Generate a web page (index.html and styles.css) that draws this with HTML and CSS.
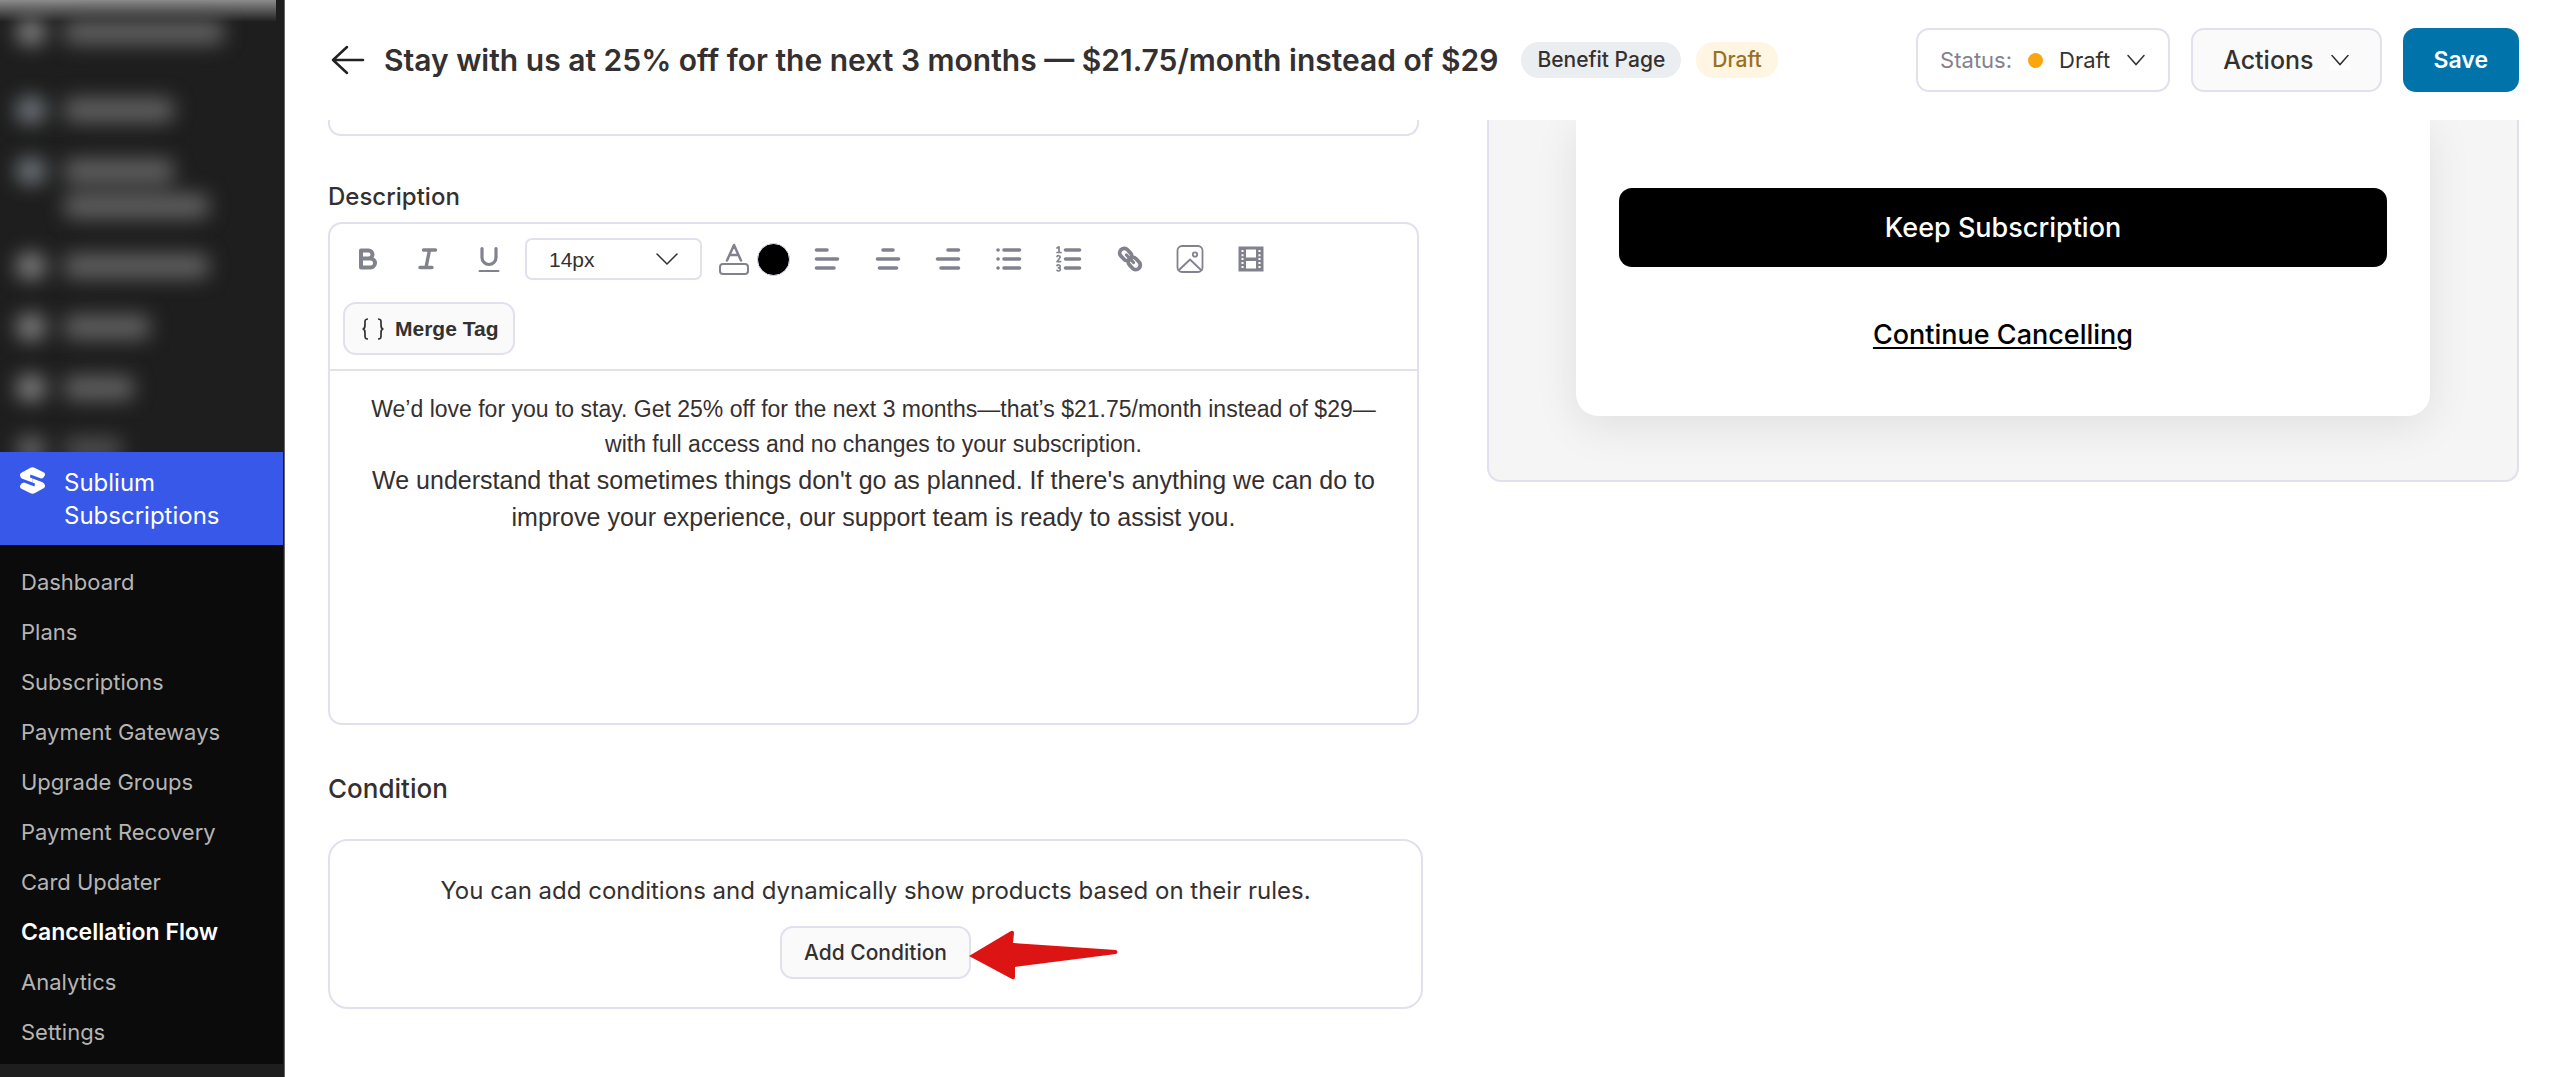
FILE: index.html
```html
<!DOCTYPE html>
<html lang="en">
<head>
<meta charset="utf-8">
<meta name="viewport" content="width=device-width, initial-scale=1">
<title>Cancellation Flow – Sublium Subscriptions</title>
<link rel="stylesheet" href="styles.css">
</head>
<body>
<div class="app">
  <aside class="sidebar">
    <div class="redacted" aria-hidden="true">
      <div class="redacted-row first"><i class="blob"></i><div class="bars"><i class="bar w160"></i></div></div>
      <div class="redacted-row"><i class="blob cool"></i><div class="bars"><i class="bar w110"></i></div></div>
      <div class="redacted-row double"><i class="blob cool"></i><div class="bars"><i class="bar w110"></i><i class="bar w145"></i></div></div>
      <div class="redacted-row"><i class="blob"></i><div class="bars"><i class="bar w145"></i></div></div>
      <div class="redacted-row"><i class="blob"></i><div class="bars"><i class="bar w90"></i></div></div>
      <div class="redacted-row"><i class="blob"></i><div class="bars"><i class="bar w70"></i></div></div>
      <div class="redacted-row last"><i class="blob"></i><div class="bars"><i class="bar w60"></i></div></div>
    </div>
    <a class="menu-current" href="#">
      <svg class="menu-logo" viewBox="0 0 25 27" width="25" height="27" fill="#fff"><path id="half" d="M1 6 10 1Q12.500-.4 15 1L24 5.500Q25.400 6.500 24.800 8.500 24 11 21 11.500L10.500 7.500 10 10.500 12.500 11.500V15.500L3 12Q.2 11 0 8.500-.2 7 1 6Z"/><use href="#half" transform="rotate(180 12.500 13.500)"/></svg>
      <span>Sublium Subscriptions</span>
    </a>
    <nav class="submenu">
      <a href="#">Dashboard</a>
      <a href="#">Plans</a>
      <a href="#">Subscriptions</a>
      <a href="#">Payment Gateways</a>
      <a href="#">Upgrade Groups</a>
      <a href="#">Payment Recovery</a>
      <a href="#">Card Updater</a>
      <a href="#" class="active" aria-current="page">Cancellation Flow</a>
      <a href="#">Analytics</a>
      <a href="#">Settings</a>
    </nav>
  </aside>

  <div class="page">
    <header class="topbar">
      <a class="back" href="#" aria-label="Back"><svg viewBox="0 0 40 32" width="40" height="32" fill="none" stroke="#222" stroke-width="2.500" stroke-linecap="round" stroke-linejoin="round"><path d="M35 16H5M19 3 5 16 19 29"/></svg></a>
      <h1>Stay with us at 25% off for the next 3 months — $21.75/month instead of $29</h1>
      <span class="pill">Benefit Page</span>
      <span class="pill draft">Draft</span>
      <div class="actions">
        <button class="status" type="button"><span class="muted">Status:</span><i class="dot"></i><span>Draft</span><svg class="chev" viewBox="0 0 20 20" width="20" height="20"><path d="M2 5.500 10 14.500 18 5.500"/></svg></button>
        <button class="menu-btn" type="button">Actions<svg class="chev boxed" viewBox="0 0 20 20" width="20" height="20"><path d="M2 5.500 10 14.500 18 5.500"/></svg></button>
        <button class="save" type="button">Save</button>
      </div>
    </header>

    <main class="content">
      <section class="form">
        <div class="field-tail"></div>
        <div class="label" id="desc-label">Description</div>
        <div class="editor">
          <div class="toolbar">
            <div class="tools">
              <button class="tool" type="button" aria-label="Bold"><svg viewBox="0 0 24 28" width="24" height="28"><path stroke-width="4" d="M6 5.500V22.500H15.500A4.500 4.500 0 0 0 15.500 13.500H6M6 5.500H13.500A4 4 0 0 1 13.500 13.500"/></svg></button>
              <button class="tool" type="button" aria-label="Italic"><svg viewBox="0 0 24 28" width="24" height="28"><path stroke-width="3.400" d="M7.500 5H19.500M4 22.500H16M13.500 5 10 22.500"/></svg></button>
              <button class="tool" type="button" aria-label="Underline"><svg viewBox="0 0 24 28" width="24" height="28"><path stroke-width="3.200" d="M5 3.500V12.500A7 7 0 0 0 19 12.500V3.500"/><path stroke-width="2" d="M2.500 26H21.500"/></svg></button>
            </div>
            <div class="size">
              <select aria-label="Font size"><option>14px</option><option>16px</option></select>
              <svg class="chev" viewBox="0 0 24 14" width="24" height="14"><path d="M2 2 12 12 22 2"/></svg>
            </div>
            <button class="color" type="button" aria-label="Text colour">
              <svg viewBox="0 0 32 34" width="32" height="34"><path stroke-width="2.500" d="M9 18.500 16 3 23 18.500M11.500 13H20.500"/><rect x="2" y="22" width="28" height="10" rx="3" stroke-width="2"/></svg>
              <i class="swatch"></i>
            </button>
            <div class="tools wide">
              <button class="tool" type="button" aria-label="Align left"><svg viewBox="0 0 28 28" width="28" height="28"><path stroke-width="3.600" d="M3.500 5H14M3.500 14H24.500M3.500 23H21"/></svg></button>
              <button class="tool" type="button" aria-label="Align centre"><svg viewBox="0 0 28 28" width="28" height="28"><path stroke-width="3.600" d="M9 5H19M3.500 14H24.500M5.500 23H22.500"/></svg></button>
              <button class="tool" type="button" aria-label="Align right"><svg viewBox="0 0 28 28" width="28" height="28"><path stroke-width="3.600" d="M14 5H24.500M3.500 14H24.500M7 23H24.500"/></svg></button>
              <button class="tool" type="button" aria-label="Bulleted list"><svg viewBox="0 0 28 28" width="28" height="28"><path stroke-width="3.600" d="M9 5H24.500M9 14H24.500M9 23H24.500M3 5H3.100M3 14H3.100M3 23H3.100"/></svg></button>
              <button class="tool" type="button" aria-label="Numbered list"><svg viewBox="0 0 28 28" width="28" height="28"><path stroke-width="3.600" d="M10.500 5H24.500M10.500 14H24.500M10.500 23H24.500"/><path stroke-width="1.700" d="M2 3 4 1.800V7.500M2 7.500H6M2 11.500C2.500 10.300 5.300 10.500 5.200 12.100 5.200 13.300 3 15 2 16.600H5.600M2 20.500C3 19.600 5.200 19.800 5.200 21.200 5.200 22.600 3.500 22.800 3.500 22.800 3.500 22.800 5.500 23 5.400 24.500 5.200 26.300 2.800 26.300 2 25.300"/></svg></button>
              <button class="tool" type="button" aria-label="Link"><svg viewBox="0 0 28 28" width="28" height="28"><g stroke-width="3.800"><rect x="3" y="5" width="13.500" height="9" rx="4.500" transform="rotate(47 9.700 9.500)"/><rect x="11.500" y="14" width="13.500" height="9" rx="4.500" transform="rotate(47 18.300 18.500)"/></g><path stroke-width="3.200" d="M10.500 10 17.500 17.500"/></svg></button>
              <button class="tool" type="button" aria-label="Image"><svg viewBox="0 0 28 28" width="28" height="28"><g stroke-width="1.800"><rect x="1.500" y="1" width="25" height="26" rx="4.500"/><path d="M3 25 14 14.500 25 25"/><circle cx="19" cy="9.500" r="2.200"/></g></svg></button>
              <button class="tool" type="button" aria-label="Video"><svg viewBox="0 0 28 28" width="28" height="28"><path class="solid" fill-rule="evenodd" d="M1.500 1.500H26.500V26.500H1.500ZM9 4.500V12.500H19V4.500ZM9 16V23.500H19V16ZM4.500 5V7H6.500V5ZM4.500 9.200V11.200H6.500V9.200ZM4.500 13V15H6.500V13ZM4.500 17V19H6.500V17ZM4.500 21V23H6.500V21ZM21.500 5V7H23.500V5ZM21.500 9.200V11.200H23.500V9.200ZM21.500 13V15H23.500V13ZM21.500 17V19H23.500V17ZM21.500 21V23H23.500V21Z"/></svg></button>
            </div>
            <button class="merge" type="button"><svg viewBox="0 0 24 22" width="24" height="22" fill="none" stroke="#353030" stroke-width="1.700"><path d="M7 1C3.500 1 4 3 4 6S4 11 1.500 11C4 11 4 13 4 16S3.500 21 7 21M17 1C20.500 1 20 3 20 6S20 11 22.500 11C20 11 20 13 20 16S20.500 21 17 21"/></svg>Merge Tag</button>
          </div>
          <div class="text" role="textbox" aria-multiline="true" aria-labelledby="desc-label" contenteditable="true" spellcheck="false">
            <p>We’d love for you to stay. Get 25% off for the next 3 months—that’s $21.75/month instead of $29—with full access and no changes to your subscription.</p>
            <p class="large">We understand that sometimes things don't go as planned. If there's anything we can do to improve your experience, our support team is ready to assist you.</p>
          </div>
        </div>

        <h2>Condition</h2>
        <div class="condition">
          <p>You can add conditions and dynamically show products based on their rules.</p>
          <div class="add-wrap">
            <button class="add" type="button">Add Condition</button>
            <svg class="pointer" viewBox="0 0 150 50" width="150" height="50" fill="#dc1414"><path d="M0 26 42 1Q45 0 45 3L44 13 147 20Q150 22 147 24L46 37 46 47Q46 50 43 49Z"/></svg>
          </div>
        </div>
      </section>

      <section class="preview">
        <div class="card">
          <button class="keep" type="button">Keep Subscription</button>
          <a href="#">Continue Cancelling</a>
        </div>
      </section>
    </main>
  </div>
</div>
</body>
</html>
```
FILE: styles.css
```css
:root {
  --line: #e1e0ed;
  --ink: #353030;
  --icon: #82828f;
  --surface: #fafafa;
}

* { box-sizing: border-box; }

body {
  margin: 0;
  background: #fff;
  color: var(--ink);
  font-family: Inter, "Liberation Sans", sans-serif;
  font-size: 24px;
}

button, select { font: inherit; color: inherit; margin: 0; cursor: pointer; }
h1, h2, p { margin: 0; }
svg { display: block; flex: none; }
i { display: block; }

.app { display: flex; min-height: 100vh; }

/* Sidebar */
.sidebar {
  flex: none;
  width: 285px;
  background: #1e1e1e;
  border-right: 1px solid #666;
}

.redacted {
  position: relative;
  height: 452px;
  overflow: hidden;
}
.redacted::before {
  content: "";
  position: absolute;
  inset: 0 8px auto 0;
  height: 22px;
  background: linear-gradient(#8c8c8c, rgba(30, 30, 30, 0));
}
.redacted-row {
  display: flex;
  gap: 18px;
  height: 61px;
  padding: 18px 0 0 16px;
  filter: blur(10px);
}
.redacted-row.first { height: 79px; padding-top: 19px; }
.redacted-row.double { height: 95px; }
.redacted-row.last { opacity: .7; }
.blob { width: 30px; height: 26px; border-radius: 13px; background: #848484; }
.blob.cool { background: #767c82; }
.bars { display: flex; flex-direction: column; gap: 11px; padding-top: 1px; }
.bar { height: 24px; border-radius: 8px; background: #626262; }
.w160 { width: 160px; }
.w145 { width: 145px; }
.w110 { width: 110px; }
.w90 { width: 86px; }
.w70 { width: 70px; }
.w60 { width: 58px; }

.menu-current {
  display: flex;
  gap: 19px;
  margin-right: 1px;
  padding: 14px 16px 13px 20px;
  background: #3858e9;
  color: #fff;
  line-height: 33px;
  text-decoration: none;
}
.menu-logo { margin-top: 1px; }

.submenu { margin-right: 1px; background: #0b0b0b; padding: 12px 0 7px; }
.submenu a {
  display: block;
  padding-left: 21px;
  color: #b5b5b5;
  font-size: 22px;
  line-height: 50px;
  text-decoration: none;
}
.submenu .active { color: #fff; font-size: 23px; font-weight: 600; }

/* Top bar */
.page { flex: 1; min-width: 0; }

.topbar {
  position: relative;
  z-index: 1;
  display: flex;
  align-items: center;
  height: 120px;
  padding: 0 41px 0 43px;
  background: #fff;
}
.back { margin-right: 16px; }
h1 { margin-right: 23px; font-size: 30px; font-weight: 600; white-space: nowrap; }
.pill {
  margin-right: 15px;
  padding: 0 16px;
  border-radius: 18px;
  background: #ebeef1;
  font-size: 21px;
  font-weight: 500;
  line-height: 36px;
  white-space: nowrap;
}
.pill.draft { background: #fff5e3; color: #9a7020; }

.actions { display: flex; gap: 21px; margin-left: auto; }
.actions button {
  display: flex;
  align-items: center;
  height: 64px;
  border: 2px solid var(--line);
  border-radius: 13px;
  white-space: nowrap;
}
.actions .status { gap: 16px; padding: 0 22px; background: #fff; font-size: 22px; }
.muted { color: var(--icon); }
.dot { width: 15px; height: 15px; border-radius: 50%; background: #fca60e; }
.actions .menu-btn { gap: 16px; padding: 0 30px; background: var(--surface); font-size: 25px; font-weight: 500; }
.actions .save {
  padding: 0 31px;
  border: 0;
  background: #0073aa;
  color: #fff;
  font-size: 23px;
  font-weight: 600;
}
.chev { fill: none; stroke: #353030; stroke-width: 1.5; stroke-linecap: round; }
.boxed { background: #fff; }

/* Form column */
.content {
  display: grid;
  grid-template-columns: 1095fr 1032fr;
  align-items: start;
  gap: 64px;
  padding: 0 41px 40px 43px;
}
.form { min-width: 0; }
.field-tail {
  height: 16px;
  margin-right: 4px;
  border: 2px solid var(--line);
  border-top: 0;
  border-radius: 0 0 13px 13px;
}
.label { padding: 45px 0 9px; font-weight: 500; line-height: 32px; }

.editor { margin-right: 4px; border: 2px solid var(--line); border-radius: 14px; }
.toolbar {
  display: flex;
  flex-wrap: wrap;
  align-items: center;
  row-gap: 22px;
  padding: 14px 6px 14px 7px;
  border-bottom: 2px solid var(--line);
}
.tools { display: flex; gap: 1px; }
.tools.wide { width: 484px; gap: 0; justify-content: space-between; }
.tool, .color { border: 0; padding: 0; background: none; }
.tool { display: grid; place-items: center; width: 60px; height: 42px; }
.tool svg, .color svg { fill: none; stroke: var(--icon); stroke-linecap: round; stroke-linejoin: round; }
.tool .solid { fill: var(--icon); stroke: none; }
.size { position: relative; margin: 0 16px 0 6px; }
.size select {
  display: block;
  width: 177px;
  height: 42px;
  padding: 0 22px;
  border: 2px solid var(--line);
  border-radius: 7px;
  background: #fff;
  font: 21px "Liberation Sans", sans-serif;
  appearance: none;
}
.size .chev { position: absolute; top: 14px; right: 23px; pointer-events: none; }
.color { display: flex; align-items: center; gap: 7px; width: 79px; }
.swatch { width: 33px; height: 33px; border: 1px solid var(--line); border-radius: 50%; background: #000; }
.merge {
  display: flex;
  align-items: center;
  gap: 10px;
  height: 53px;
  margin-left: 6px;
  padding: 0 15px 0 16px;
  border: 2px solid var(--line);
  border-radius: 13px;
  background: var(--surface);
  font: 700 21px "Liberation Sans", sans-serif;
}
.text {
  min-height: 352px;
  padding: 21px 25px;
  font-family: "Liberation Sans", sans-serif;
  font-size: 23px;
  line-height: 35px;
  text-align: center;
}
.text .large { font-size: 25px; line-height: 37px; }

h2 { padding: 48px 0 34px; font-size: 26px; font-weight: 500; line-height: 32px; }
.condition {
  padding: 34px 20px 28px;
  border: 2px solid var(--line);
  border-radius: 20px;
  text-align: center;
}
.condition p { margin-bottom: 19px; line-height: 32px; }
.add-wrap { position: relative; display: inline-block; vertical-align: top; }
.add {
  display: block;
  height: 53px;
  padding: 0 22px;
  border: 2px solid var(--line);
  border-radius: 13px;
  background: var(--surface);
  font-size: 21px;
  font-weight: 500;
}
.pointer { position: absolute; top: 4px; left: 100%; margin-left: -2px; }

/* Preview column */
.preview {
  padding: 0 87px 64px;
  border: 2px solid var(--line);
  border-top: 0;
  border-radius: 0 0 14px 14px;
  background: #f5f5f5;
}
.card {
  display: flex;
  flex-direction: column;
  align-items: center;
  gap: 48px;
  padding: 68px 43px 61px;
  border-radius: 0 0 22px 22px;
  background: #fff;
  box-shadow: 0 10px 45px rgba(0, 0, 0, .09);
}
.keep {
  width: 100%;
  height: 79px;
  border: 0;
  border-radius: 13px;
  background: #000;
  color: #fff;
  font-size: 27px;
  font-weight: 500;
}
.card a {
  color: #000;
  font-size: 27px;
  font-weight: 500;
  line-height: 40px;
  text-decoration-thickness: 2px;
  text-underline-offset: 3px;
}
```
